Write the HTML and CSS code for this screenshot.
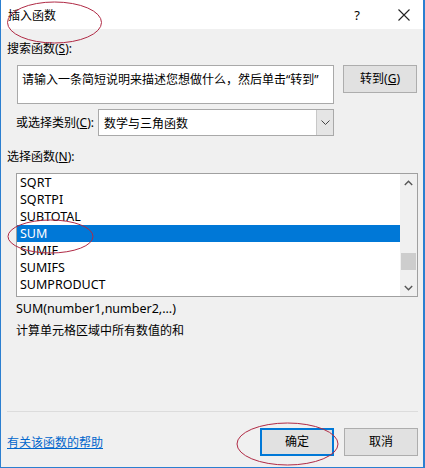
FILE: index.html
```html
<!DOCTYPE html>
<html lang="zh-CN">
<head>
<meta charset="utf-8">
<title>插入函数</title>
<link rel="stylesheet" href="styles.css">
</head>
<body>
<div class="dialog">
  <div class="titlebar">
    <span class="title">插入函数</span>
    <span class="help">?</span>
    <svg class="close" width="12" height="12" viewBox="0 0 12 12"><path d="M0.5 0.5 L11.5 11.5 M11.5 0.5 L0.5 11.5" stroke="#222" stroke-width="1.1" fill="none"/></svg>
  </div>
  <div class="content">
    <div class="label first">搜索函数(<u>S</u>):</div>
    <div class="search-row">
      <div class="textarea">请输入一条简短说明来描述您想做什么，然后单击“转到”</div>
      <div class="btn">转到(<u>G</u>)</div>
    </div>
    <div class="cat-row">
      <span class="cat-label">或选择类别(<u>C</u>):</span>
      <div class="select">
        <span class="select-text">数学与三角函数</span>
        <span class="select-arrow"><svg width="9" height="5" viewBox="0 0 9 5"><path d="M0.5 0.5 L4.5 4.5 L8.5 0.5" stroke="#444" fill="none"/></svg></span>
      </div>
    </div>
    <div class="label fn-label">选择函数(<u>N</u>):</div>
    <div class="listbox">
      <div class="items">
        <div class="item">SQRT</div>
        <div class="item">SQRTPI</div>
        <div class="item">SUBTOTAL</div>
        <div class="item selected">SUM</div>
        <div class="item">SUMIF</div>
        <div class="item">SUMIFS</div>
        <div class="item">SUMPRODUCT</div>
      </div>
      <div class="scrollbar">
        <div class="sb-btn"><svg width="9" height="6" viewBox="0 0 9 6"><path d="M0.8 5 L4.5 1.3 L8.2 5" stroke="#555" stroke-width="1.4" fill="none"/></svg></div>
        <div class="sb-track"><div class="sb-thumb"></div></div>
        <div class="sb-btn"><svg width="9" height="6" viewBox="0 0 9 6"><path d="M0.8 1 L4.5 4.7 L8.2 1" stroke="#555" stroke-width="1.4" fill="none"/></svg></div>
      </div>
    </div>
    <div class="syntax">SUM(number1,number2,...)</div>
    <div class="desc">计算单元格区域中所有数值的和</div>
    <div class="separator"></div>
    <div class="footer">
      <a class="link" href="#">有关该函数的帮助</a>
      <div class="buttons">
        <div class="btn default">确定</div>
        <div class="btn">取消</div>
      </div>
    </div>
  </div>
  <svg class="marks" width="425" height="468" viewBox="0 0 425 468">
    <ellipse cx="54.5" cy="22.5" rx="47" ry="20.5" fill="none" stroke="#b02a45" stroke-width="1"/>
    <ellipse cx="50.5" cy="236.5" rx="42.5" ry="16.5" fill="none" stroke="#b02a45" stroke-width="1"/>
    <ellipse cx="287.5" cy="444" rx="50.5" ry="21" fill="none" stroke="#b02a45" stroke-width="1"/>
  </svg>
</div>
</body>
</html>
```
FILE: styles.css
```css
* { box-sizing: border-box; }
html, body { margin: 0; padding: 0; }
body {
  font-family: "Noto Sans", "Noto Sans CJK SC", sans-serif;
  font-size: 12px;
  color: #000;
}
.dialog {
  position: relative;
  width: 425px;
  height: 468px;
  background: #f0f0f0;
  border-left: 1px solid #2b7fd0;
  border-right: 2px solid #2b7fd0;
  border-bottom: 1px solid #2b7fd0;
  display: flex;
  flex-direction: column;
}
.titlebar {
  height: 29px;
  background: #fff;
  display: flex;
  align-items: center;
  padding-left: 7px;
  flex-shrink: 0;
}
.title {
  font-family: "Noto Sans CJK SC", sans-serif;
  font-size: 12px;
  line-height: 16px;
  flex: 1;
}
.help {
  font-size: 13px;
  margin-right: 38px;
  line-height: 16px;
}
.close { margin-right: 13px; }
.content {
  flex: 1;
  padding: 0 5px 0 6px;
  display: flex;
  flex-direction: column;
}
.label, .cat-label, .syntax, .desc {
  line-height: 16px;
  font-family: "Noto Sans", "Noto Sans CJK SC", sans-serif;
}
.label.first { margin-top: 12px; }
.search-row {
  display: flex;
  margin-top: 8px;
  margin-left: 10px;
  gap: 9px;
  align-items: flex-start;
}
.textarea {
  width: 317px;
  height: 39px;
  background: #fff;
  border: 1px solid #a9a9a9;
  padding: 6px 0 0 4px;
  line-height: 16px;
  white-space: nowrap;
  overflow: hidden;
  font-family: "Noto Sans", "Noto Sans CJK SC", sans-serif;
}
.btn {
  width: 74px;
  height: 28px;
  background: #e1e1e1;
  border: 1px solid #adadad;
  display: flex;
  align-items: center;
  justify-content: center;
  line-height: 16px;
}
.btn.default { border: 2px solid #0078d7; }
.cat-row {
  display: flex;
  align-items: center;
  margin-top: 5px;
  margin-left: 9px;
}
.cat-label { width: 82px; }
.select {
  width: 236px;
  height: 27px;
  background: #fff;
  border: 1px solid #a9a9a9;
  display: flex;
  align-items: stretch;
}
.select-text {
  flex: 1;
  padding-left: 5px;
  display: flex;
  align-items: center;
  font-family: "Noto Sans CJK SC", sans-serif;
}
.select-arrow {
  width: 17px;
  background: #e5e5e5;
  border-left: 1px solid #c8c8c8;
  display: flex;
  align-items: center;
  justify-content: center;
}
.fn-label { margin-top: 13px; }
.listbox {
  margin-top: 8px;
  margin-left: 9px;
  width: 402px;
  height: 124px;
  background: #fff;
  border: 1px solid #a0a0a0;
  display: flex;
}
.items { flex: 1; }
.item {
  height: 17px;
  line-height: 17px;
  padding-left: 3px;
  font-size: 12.5px;
}
.item.selected { background: #0078d7; color: #fff; }
.scrollbar {
  width: 17px;
  background: #f0f0f0;
  display: flex;
  flex-direction: column;
}
.sb-btn {
  height: 17px;
  display: flex;
  align-items: center;
  justify-content: center;
}
.sb-track { flex: 1; }
.sb-thumb {
  margin: 62px 1px 0 1px;
  height: 17px;
  background: #cdcdcd;
}
.syntax { margin-top: 4px; margin-left: 9px; font-size: 12.5px; }
.desc { margin-top: 5px; margin-left: 9px; font-family: "Noto Sans CJK SC", sans-serif; }
.separator {
  margin-top: auto;
  height: 1px;
  background: #dcdcdc;
  margin-bottom: 16px;
}
.footer {
  display: flex;
  align-items: center;
  justify-content: space-between;
  margin-bottom: 11px;
}
.link {
  color: #0066cc;
  text-decoration: underline;
  font-family: "Noto Sans CJK SC", sans-serif;
  line-height: 16px;
}
.buttons { display: flex; gap: 10px; }
.marks {
  position: absolute;
  left: -1px;
  top: 0;
  pointer-events: none;
}
```
